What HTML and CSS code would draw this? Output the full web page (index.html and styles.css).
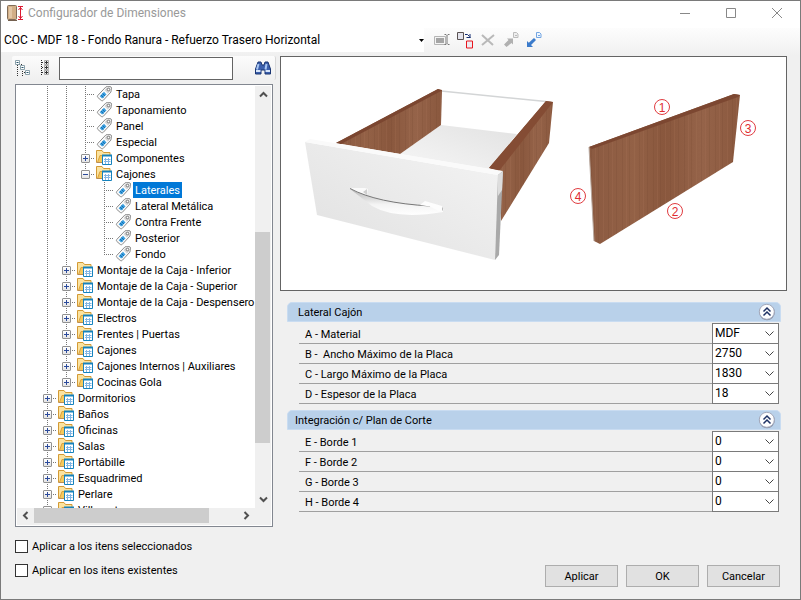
FILE: index.html
```
<!DOCTYPE html>
<html lang="es">
<head>
    <meta charset="UTF-8">
    <meta name="viewport" content="width=device-width, initial-scale=1.0">
    <title>Configurador de Dimensiones</title>
    <link rel="stylesheet" href="styles.css">
</head>
<body>
    <!-- Iconos compartidos del árbol y de los grupos -->
    <svg class="sprites" width="0" height="0">
        <defs>
            <linearGradient id="wood" x1="0" y1="0" x2="1" y2="0">
                <stop offset="0" stop-color="#8b5a41"/>
                <stop offset=".3" stop-color="#936146"/>
                <stop offset=".5" stop-color="#89573d"/>
                <stop offset=".75" stop-color="#956349"/>
                <stop offset="1" stop-color="#8a583e"/>
            </linearGradient>
        </defs>
        <symbol id="tag" viewBox="0 0 16 16">
            <path d="M9.500.8 13.500.6q1.500.1 1.500 1.500l-.6 4-7.600 8.200q-1 .9-2 .2L1.200 11.300q-.7-.9.100-1.900z" fill="#fafafa" stroke="#8c8c8c" stroke-width="1"/>
            <path d="M9.800 2 13.700 1.500l-.3 4-2 2-3.200-3.300z" fill="#d4d4d4"/>
            <path d="M7.500 5.800 10 8.500 5.700 12.600 3.200 10.200z" fill="#3a9fe0"/>
            <path d="M6 7.500 8.500 10M4.500 9 7 11.500" stroke="#1670b0"/>
            <circle cx="12" cy="3.500" r="1.300" fill="#fff" stroke="#777"/>
        </symbol>
        <symbol id="folder" viewBox="0 0 17 16">
            <path d="M.5 12.500V.5H6l1.500 2h6.500v3" fill="#fbe3a0" stroke="#d39a35"/>
            <path d="M1.500 12.500 4 5.500h11.500L13 12.500z" fill="#f6c95c" stroke="#d9a240"/>
            <path d="M.5 12.500h7" stroke="#b98d55"/>
            <path d="M6.500 5.500h9v9h-9z" fill="#fff" stroke="#1683bd"/>
            <path d="M6 4.500h10v2H6z" fill="#1683bd"/>
            <path d="M8 9.500h6.500M8 11.500h6.500M9.500 8v6M12.500 8v6" stroke="#82b6e4"/>
        </symbol>
        <symbol id="collapse" viewBox="0 0 18 18">
            <circle cx="9" cy="9.500" r="7.800" fill="#8b8fa3"/>
            <circle cx="8.800" cy="8.800" r="7.500" fill="#fdfdfe" stroke="#a2a8ba"/>
            <path d="M5.500 8.500 9 5l3.500 3.500M5.500 12.500 9 9l3.500 3.500" fill="none" stroke="#1e3163" stroke-width="1.500"/>
        </symbol>
    </svg>

    <div class="window">
        <header class="titlebar">
            <svg class="app-icon" width="17" height="16" viewBox="0 0 17 16">
                <rect x=".5" y=".5" width="9" height="14" rx="1" fill="#d2af87" stroke="#806c58"/>
                <path d="M2 2h3v11H2z" fill="#e2c7a6"/>
                <path d="M1 15.500h9" stroke="#74604f"/>
                <path d="M11 1.500h5M11 14.500h5M13.500 2v12M11.500 5l2-2.500 2 2.500M11.500 11l2 2.500 2-2.500" fill="none" stroke="#dc1830" stroke-width="1"/>
            </svg>
            <h1>Configurador de Dimensiones</h1>
            <div class="window-buttons">
                <button aria-label="Minimizar"><svg width="12" height="12" viewBox="0 0 12 12"><path d="M1 6.500h10"/></svg></button>
                <button aria-label="Maximizar"><svg width="12" height="12" viewBox="0 0 12 12"><path d="M1.500 1.500h9v9h-9z"/></svg></button>
                <button aria-label="Cerrar"><svg width="12" height="12" viewBox="0 0 12 12"><path d="M1 1l10 10M11 1 1 11"/></svg></button>
            </div>
        </header>

        <div class="toolbar">
            <select class="config-select" aria-label="Configuración">
                <option>COC - MDF 18 - Fondo Ranura - Refuerzo Trasero Horizontal</option>
            </select>
            <button aria-label="Renombrar">
                <svg width="16" height="16" viewBox="0 0 16 16">
                    <path d="M.5 4.500h11v8H.5z" fill="#f4f4f4" stroke="#b5b5b5"/>
                    <path d="M2 6h8v5H2z" fill="#a5a5a5"/>
                    <path d="M10.500 2.500h1.500l1 1 1-1h1.500M13 3.500v8M10.500 12.500h1.500l1-1 1 1h1.500" fill="none" stroke="#777"/>
                </svg>
            </button>
            <button aria-label="Duplicar">
                <svg width="16" height="17" viewBox="0 0 16 17">
                    <path d="M.5.5h6v7h-6z" fill="#e3e3ec" stroke="#5a5252"/>
                    <path d="M8 2.500h2.500l2 2M13 2v4M9.500 5.500h4" fill="none" stroke="#152c70"/>
                    <path d="M9.500 9h6v7h-6z" fill="#ececf2" stroke="#e8141c"/>
                </svg>
            </button>
            <button aria-label="Eliminar">
                <svg width="16" height="16" viewBox="0 0 16 16">
                    <path d="M2 3l11 10M14 3 2 13" stroke="#b9b9b9" stroke-width="2"/>
                </svg>
            </button>
            <button aria-label="Exportar">
                <svg width="16" height="16" viewBox="0 0 16 16">
                    <path d="M1 12.500 5.500 8 4 6.500h6v6L8.500 11 3.500 15z" fill="#b0b0b0"/>
                    <path d="M10.500.5h3l1.500 1.500v3.500h-4.500z" fill="#eee" stroke="#bcbcbc"/>
                    <path d="M12 3.500h2" stroke="#bbb"/>
                </svg>
            </button>
            <button aria-label="Importar">
                <svg width="16" height="16" viewBox="0 0 16 16">
                    <path d="M1 15V9l1.800 1.700L8 6l2 2-5 5L7 15z" fill="#3b7bcb"/>
                    <path d="M10.500.5h3l1.500 1.500v3.500h-4.500z" fill="#eef6ff" stroke="#74a6e2"/>
                    <path d="M12 3.500h2" stroke="#74a6e2"/>
                </svg>
            </button>
        </div>

        <main class="content">
            <section class="sidebar">
                <div class="search-bar">
                    <button aria-label="Contraer todo">
                        <svg width="16" height="16" viewBox="0 0 16 16">
                            <path d="M2.500 5v11M4 4.500h3M7.500 9v7M9 7.500h2M9 12.500h2" stroke="#333" stroke-dasharray="1 1"/>
                            <path d="M.5.5h4v4h-4zM5.500 5.500h4v4h-4zM10.500 10.500h4v4h-4z" fill="#fff" stroke="#8ba1ab"/>
                            <path d="M1.500 2.500h2M6.500 7.500h2M11.500 12.500h2" stroke="#245369"/>
                        </svg>
                    </button>
                    <button aria-label="Expandir todo">
                        <svg width="10" height="16" viewBox="0 0 10 16">
                            <path d="M1.500 0v16" stroke="#222" stroke-dasharray="1 1"/>
                            <path d="M4.500.5h4v4h-4zM4.500 5.500h4v4h-4zM4.500 10.500h4v4h-4z" fill="#eee" stroke="#aaa"/>
                            <path d="M2 2.500h1M2 7.500h1M2 12.500h1M5 2.500h3M5 7.500h3M5 12.500h3M6.500 1v3M6.500 6v3M6.500 11v3" stroke="#333"/>
                        </svg>
                    </button>
                    <input type="text" aria-label="Buscar">
                    <button class="find" aria-label="Buscar">
                        <svg width="16" height="14" viewBox="0 0 16 14">
                            <path d="M3 1h3l1 3h2l1-3h3l2.500 7v5h-5.500V9h-4v4H.5V8z" fill="#3c60ad" stroke="#1b3672"/>
                            <path d="M3.500 3 2 8.500M11.500 3l-1 5.500" stroke="#a9c7f4" stroke-width="2"/>
                            <path d="M1 10h4.500M10.500 10h4.500" stroke="#d8e6fb" stroke-width="2"/>
                        </svg>
                    </button>
                </div>

                <div class="tree-box">
                    <div class="tree-view">
                        <ul class="tree">
                            <li>
                                <ul>
                                    <li>
                                        <ul>
                                            <li><div class="node"><span class="stem"></span><svg><use href="#tag"/></svg><span class="name">Tapa</span></div></li>
                                            <li><div class="node"><span class="stem"></span><svg><use href="#tag"/></svg><span class="name">Taponamiento</span></div></li>
                                            <li><div class="node"><span class="stem"></span><svg><use href="#tag"/></svg><span class="name">Panel</span></div></li>
                                            <li><div class="node"><span class="stem"></span><svg><use href="#tag"/></svg><span class="name">Especial</span></div></li>
                                            <li><div class="node"><span class="stem"><button class="toggle plus" aria-label="Expandir"></button></span><svg><use href="#folder"/></svg><span class="name">Componentes</span></div></li>
                                            <li class="last"><div class="node"><span class="stem"><button class="toggle" aria-label="Contraer"></button></span><svg><use href="#folder"/></svg><span class="name">Cajones</span></div>
                                                <ul>
                                                    <li><div class="node"><span class="stem"></span><svg><use href="#tag"/></svg><span class="name selected">Laterales</span></div></li>
                                                    <li><div class="node"><span class="stem"></span><svg><use href="#tag"/></svg><span class="name">Lateral Metálica</span></div></li>
                                                    <li><div class="node"><span class="stem"></span><svg><use href="#tag"/></svg><span class="name">Contra Frente</span></div></li>
                                                    <li><div class="node"><span class="stem"></span><svg><use href="#tag"/></svg><span class="name">Posterior</span></div></li>
                                                    <li class="last"><div class="node"><span class="stem"></span><svg><use href="#tag"/></svg><span class="name">Fondo</span></div></li>
                                                </ul>
                                            </li>
                                        </ul>
                                    </li>
                                    <li><div class="node"><span class="stem"><button class="toggle plus" aria-label="Expandir"></button></span><svg><use href="#folder"/></svg><span class="name">Montaje de la Caja - Inferior</span></div></li>
                                    <li><div class="node"><span class="stem"><button class="toggle plus" aria-label="Expandir"></button></span><svg><use href="#folder"/></svg><span class="name">Montaje de la Caja - Superior</span></div></li>
                                    <li><div class="node"><span class="stem"><button class="toggle plus" aria-label="Expandir"></button></span><svg><use href="#folder"/></svg><span class="name">Montaje de la Caja - Despensero</span></div></li>
                                    <li><div class="node"><span class="stem"><button class="toggle plus" aria-label="Expandir"></button></span><svg><use href="#folder"/></svg><span class="name">Electros</span></div></li>
                                    <li><div class="node"><span class="stem"><button class="toggle plus" aria-label="Expandir"></button></span><svg><use href="#folder"/></svg><span class="name">Frentes | Puertas</span></div></li>
                                    <li><div class="node"><span class="stem"><button class="toggle plus" aria-label="Expandir"></button></span><svg><use href="#folder"/></svg><span class="name">Cajones</span></div></li>
                                    <li><div class="node"><span class="stem"><button class="toggle plus" aria-label="Expandir"></button></span><svg><use href="#folder"/></svg><span class="name">Cajones Internos | Auxiliares</span></div></li>
                                    <li class="last"><div class="node"><span class="stem"><button class="toggle plus" aria-label="Expandir"></button></span><svg><use href="#folder"/></svg><span class="name">Cocinas Gola</span></div></li>
                                </ul>
                            </li>
                            <li><div class="node"><span class="stem"><button class="toggle plus" aria-label="Expandir"></button></span><svg><use href="#folder"/></svg><span class="name">Dormitorios</span></div></li>
                            <li><div class="node"><span class="stem"><button class="toggle plus" aria-label="Expandir"></button></span><svg><use href="#folder"/></svg><span class="name">Baños</span></div></li>
                            <li><div class="node"><span class="stem"><button class="toggle plus" aria-label="Expandir"></button></span><svg><use href="#folder"/></svg><span class="name">Oficinas</span></div></li>
                            <li><div class="node"><span class="stem"><button class="toggle plus" aria-label="Expandir"></button></span><svg><use href="#folder"/></svg><span class="name">Salas</span></div></li>
                            <li><div class="node"><span class="stem"><button class="toggle plus" aria-label="Expandir"></button></span><svg><use href="#folder"/></svg><span class="name">Portábille</span></div></li>
                            <li><div class="node"><span class="stem"><button class="toggle plus" aria-label="Expandir"></button></span><svg><use href="#folder"/></svg><span class="name">Esquadrimed</span></div></li>
                            <li><div class="node"><span class="stem"><button class="toggle plus" aria-label="Expandir"></button></span><svg><use href="#folder"/></svg><span class="name">Perlare</span></div></li>
                            <li><div class="node"><span class="stem"><button class="toggle plus" aria-label="Expandir"></button></span><svg><use href="#folder"/></svg><span class="name">Villamet</span></div></li>
                        </ul>
                    </div>
                    <div class="scroll vertical">
                        <button aria-label="Subir"><svg width="9" height="9" viewBox="0 0 9 9"><path d="M1 6.500 4.500 3 8 6.500"/></svg></button>
                        <div class="before"></div>
                        <div class="thumb"></div>
                        <div class="after"></div>
                        <button aria-label="Bajar"><svg width="9" height="9" viewBox="0 0 9 9"><path d="M1 2.500 4.500 6 8 2.500"/></svg></button>
                    </div>
                    <div class="scroll horizontal">
                        <button aria-label="Izquierda"><svg width="9" height="9" viewBox="0 0 9 9"><path d="M6.500 1 3 4.500 6.500 8"/></svg></button>
                        <div class="thumb"></div>
                        <div class="after"></div>
                        <button aria-label="Derecha"><svg width="9" height="9" viewBox="0 0 9 9"><path d="M2.500 1 6 4.500 2.500 8"/></svg></button>
                    </div>
                    <div class="corner"></div>
                </div>
            </section>

            <section class="details">
                <div class="preview">
                    <svg viewBox="281 57 505 233">
                        <defs>
                            <pattern id="grain" width="31" height="300" patternUnits="userSpaceOnUse">
                                <path d="M2.500 0v300M9.500 0v300M19.500 0v300M27.500 0v300" stroke="#6f412c" stroke-opacity=".18"/>
                                <path d="M6.500 0v300M14.500 0v300M23.500 0v300" stroke="#b07c5c" stroke-opacity=".18"/>
                            </pattern>
                            <linearGradient id="front" x1="0" y1="1" x2="1" y2="0">
                                <stop offset="0" stop-color="#e0e0e0"/>
                                <stop offset="1" stop-color="#f4f4f4"/>
                            </linearGradient>
                            <linearGradient id="floor" x1="1" y1="0" x2="0" y2="1">
                                <stop offset="0" stop-color="#e2e2e2"/>
                                <stop offset="1" stop-color="#f6f6f6"/>
                            </linearGradient>
                            <linearGradient id="grip" x1="0" y1="0" x2="0" y2="1">
                                <stop offset="0" stop-color="#b4b4b4"/>
                                <stop offset=".6" stop-color="#f4f4f4"/>
                                <stop offset="1" stop-color="#fff"/>
                            </linearGradient>
                        </defs>
                        <!-- Cajón -->
                        <path d="M441 125 517 134 489 169 400 154z" fill="url(#floor)"/>
                        <path d="M441 91 546 101.500" stroke="#d3d5d6" stroke-width="1.500"/>
                        <path d="M336 143 438 89 442 90 441 125 400 154z" fill="url(#wood)"/>
                        <path d="M336 143 438 89 442 90 441 125 400 154z" fill="url(#grain)"/>
                        <path d="M336 143 438 89 442 90.500 341 144z" fill="#7b4630"/>
                        <path d="M489 168 546 101 553 102 549 143 501 221V171z" fill="url(#wood)"/>
                        <path d="M489 168 546 101 553 102 549 143 501 221V171z" fill="url(#grain)"/>
                        <path d="M489 168 546 101 553 102 499 171z" fill="#844c34"/>
                        <path d="M305 142 498 175 495 260 317 215z" fill="url(#front)"/>
                        <path d="M305 142 310 139 503 171 498 175z" fill="#fafafa"/>
                        <path d="M498 175 503 171 499 255 495 260z" fill="#a9a9a9"/>
                        <path d="M498 175 503 171 502 190 498 196z" fill="#ddd"/>
                        <path d="M351 188 365 188 368 189 367 195 354 191z" fill="#fafafa"/>
                        <path d="M363 192 367 189 367 195z" fill="#cfcfcf"/>
                        <path d="M350 189Q377 203 430 206.500L443 208V212Q396 220 372 206z" fill="url(#grip)"/>
                        <path d="M350 188.500Q377 203 430 206" fill="none" stroke="#777"/>
                        <path d="M420 205 425 201 442 206 443.500 210 439 211 430 206.500z" fill="#fdfdfd"/>
                        <path d="M442.500 207.500v3" stroke="#bbb"/>
                        <!-- Lateral -->
                        <path d="M589 147 734 94 740 95 733 162 600 244 594 241z" fill="url(#wood)"/>
                        <path d="M589 147 734 94 740 95 733 162 600 244 594 241z" fill="url(#grain)"/>
                        <path d="M589 147 734 94 740 95 738 97 592 149z" fill="#7c4731"/>
                        <path d="M589 147 594 241" stroke="#b9a99f"/>
                        <g class="edge-marks">
                            <circle cx="662" cy="107" r="7.500"/><text x="662" y="112">1</text>
                            <circle cx="675" cy="211" r="7.500"/><text x="675" y="216">2</text>
                            <circle cx="748" cy="128" r="7.500"/><text x="748" y="133">3</text>
                            <circle cx="578" cy="196" r="7.500"/><text x="578" y="201">4</text>
                        </g>
                    </svg>
                </div>

                <section class="group">
                    <header class="group-header">
                        <h2>Lateral Cajón</h2>
                        <button aria-label="Contraer"><svg width="18" height="18"><use href="#collapse"/></svg></button>
                    </header>
                    <div class="field"><label for="a">A - Material</label><select id="a"><option>MDF</option></select></div>
                    <div class="field"><label for="b">B -&nbsp; Ancho Máximo de la Placa</label><select id="b"><option>2750</option></select></div>
                    <div class="field"><label for="c">C - Largo Máximo de la Placa</label><select id="c"><option>1830</option></select></div>
                    <div class="field"><label for="d">D - Espesor de la Placa</label><select id="d"><option>18</option></select></div>
                </section>

                <section class="group">
                    <header class="group-header cut-plan">
                        <h2>Integración c/ Plan de Corte</h2>
                        <button aria-label="Contraer"><svg width="18" height="18"><use href="#collapse"/></svg></button>
                    </header>
                    <div class="field"><label for="e">E - Borde 1</label><select id="e"><option>0</option></select></div>
                    <div class="field"><label for="f">F - Borde 2</label><select id="f"><option>0</option></select></div>
                    <div class="field"><label for="g">G - Borde 3</label><select id="g"><option>0</option></select></div>
                    <div class="field"><label for="h">H - Borde 4</label><select id="h"><option>0</option></select></div>
                </section>
            </section>
        </main>

        <footer class="footer">
            <div class="options">
                <label><input type="checkbox">Aplicar a los itens seleccionados</label>
                <label><input type="checkbox">Aplicar en los itens existentes</label>
            </div>
            <div class="actions">
                <button>Aplicar</button>
                <button>OK</button>
                <button>Cancelar</button>
            </div>
        </footer>
    </div>
</body>
</html>
```
FILE: styles.css
```
* {
    box-sizing: border-box;
}

body {
    margin: 0;
    font-family: Roboto, "Liberation Sans", sans-serif;
    font-size: 11px;
    color: #000;
}

button, input, select {
    font: inherit;
    color: inherit;
    margin: 0;
    padding: 0;
    border: 0;
    border-radius: 0;
    background: none;
}

svg {
    display: block;
}

ul {
    list-style: none;
    margin: 0;
    padding: 0;
}

.sprites {
    position: absolute;
}

.window {
    display: flex;
    flex-direction: column;
    height: 100vh;
    border: 1px solid #7a7a7a;
    background-color: #f0f0f0;
}

/* Barra de título */
.titlebar {
    display: flex;
    align-items: center;
    height: 24px;
    margin-bottom: 3px;
    padding-left: 6px;
    background-color: #fff;
    box-shadow: 0 3px #fff;
}

.titlebar h1 {
    flex: 1;
    margin: 0 0 0 4px;
    font-size: 12px;
    font-weight: normal;
    color: #999;
}

.window-buttons {
    display: flex;
}

.window-buttons button {
    display: flex;
    justify-content: center;
    align-items: center;
    width: 46px;
    height: 24px;
}

.window-buttons path {
    fill: none;
    stroke: #888;
}

/* Barra de herramientas */
.toolbar {
    display: flex;
    align-items: center;
    gap: 7px;
    height: 28px;
    padding-bottom: 4px;
    background: linear-gradient(#fdfdfd, #f0f0f0);
}

.config-select {
    appearance: none;
    width: 53%;
    height: 24px;
    margin-right: 3px;
    padding-left: 3px;
    background: #fff url("data:image/svg+xml,%3Csvg xmlns='http://www.w3.org/2000/svg' width='5' height='3'%3E%3Cpath d='M0 0h5L2.500 3z'/%3E%3C/svg%3E") no-repeat right center;
    font-size: 12px;
}

/* Zona central */
.content {
    flex: 1;
    display: grid;
    grid-template-columns: 264px 1fr;
    gap: 4px;
    min-height: 0;
    padding: 0 13px 0 11px;
}

.sidebar {
    display: flex;
    flex-direction: column;
    min-height: 0;
}

.search-bar {
    display: flex;
    align-items: center;
    gap: 9px;
    height: 24px;
    margin-bottom: 4px;
    padding: 0 4px 0 3px;
    border-right: 1px solid #d8d8d8;
    border-radius: 2px;
    background: linear-gradient(#fcfcfc, #f0f0f0);
}

.search-bar input {
    width: 174px;
    height: 23px;
    padding: 0 4px;
    border: 1px solid #646464;
    background-color: #fff;
}

.search-bar .find {
    margin-left: auto;
}

.tree-box {
    flex: 1;
    display: grid;
    grid-template-columns: 1fr 16px;
    grid-template-rows: 1fr 17px;
    min-height: 0;
    margin: 0 3px;
    padding: 1px;
    border: 1px solid #828790;
    background-color: #fff;
}

.tree-view {
    min-height: 0;
    overflow: hidden;
    padding-left: 21px;
}

/* La línea punteada vertical es el fondo de cada elemento */
.tree li {
    background: repeating-linear-gradient(#777 0 1px, transparent 1px 2px) 9px 0 / 1px 100% no-repeat;
}

.tree li.last {
    background-size: 1px 8px;
}

.tree li ul {
    padding-left: 19px;
}

.node {
    display: flex;
    align-items: center;
    height: 16px;
}

.node svg {
    flex: none;
    width: 17px;
    height: 16px;
    margin: 0 1px;
}

.stem {
    display: flex;
    flex: none;
    align-items: center;
    width: 19px;
    height: 16px;
    padding-left: 5px;
    background: repeating-linear-gradient(90deg, #777 0 1px, transparent 1px 2px) 9px 8px / 10px 1px no-repeat;
}

.toggle {
    width: 9px;
    height: 9px;
    border: 1px solid #919191;
    border-radius: 1px;
    background:
        linear-gradient(#2b4a9b, #2b4a9b) center / 5px 1px no-repeat,
        linear-gradient(#fff, #e4e4e4);
}

.toggle.plus {
    background:
        linear-gradient(#2b4a9b, #2b4a9b) center / 5px 1px no-repeat,
        linear-gradient(#2b4a9b, #2b4a9b) center / 1px 5px no-repeat,
        linear-gradient(#fff, #e4e4e4);
}

.name {
    height: 16px;
    padding: 0 2px;
    line-height: 18px;
    white-space: nowrap;
}

.name.selected {
    background-color: #0078d7;
    color: #fff;
}

/* Barras de desplazamiento */
.scroll {
    display: flex;
    background-color: #f0f0f0;
}

.scroll button {
    display: flex;
    justify-content: center;
    align-items: center;
    width: 17px;
    height: 17px;
}

.scroll.horizontal button {
    height: 15px;
}

.scroll path {
    fill: none;
    stroke: #505050;
    stroke-width: 2;
}

.scroll .thumb {
    background-color: #cdcdcd;
}

.vertical {
    flex-direction: column;
}

.vertical .before {
    flex: 129;
}

.vertical .thumb {
    flex: 210;
    margin-right: 1px;
}

.vertical .after {
    flex: 48;
}

.horizontal .thumb {
    flex: 175;
    margin-bottom: 2px;
}

.horizontal .after {
    flex: 29;
}

.corner {
    background-color: #f0f0f0;
}

/* Panel derecho */
.preview {
    margin-bottom: 11px;
    border: 1px solid #646464;
    background-color: #fff;
}

.preview svg {
    width: 100%;
    height: auto;
}

.edge-marks circle {
    fill: none;
    stroke: #e03c40;
}

.edge-marks text {
    fill: #e02c30;
    font-family: "Liberation Sans", Arial, sans-serif;
    font-size: 12px;
    text-anchor: middle;
}

.group {
    margin: 0 6px 6px 7px;
}

.group-header {
    display: flex;
    justify-content: space-between;
    align-items: center;
    height: 20px;
    margin-bottom: 2px;
    padding: 0 4px 0 10px;
    border: 1px solid #c9dcf1;
    border-radius: 5px 5px 0 0;
    background-color: #b9d1ea;
}

.group-header.cut-plan {
    padding-left: 7px;
}

.group-header h2 {
    margin: 0;
    font-size: 11px;
    font-weight: normal;
}

.field {
    display: flex;
    justify-content: space-between;
    height: 20px;
    margin: 0 2px 0 12px;
    border-bottom: 1px solid #a0a0a0;
}

.field label {
    padding-left: 6px;
    line-height: 22px;
}

.field select {
    appearance: none;
    width: 67px;
    height: 21px;
    margin-top: -1px;
    padding: 0 0 1px 2px;
    border: 1px solid #7a7a7a;
    background: #fff url("data:image/svg+xml,%3Csvg xmlns='http://www.w3.org/2000/svg' width='9' height='6'%3E%3Cpath d='M.5.5l4 4 4-4' fill='none' stroke='%23444'/%3E%3C/svg%3E") no-repeat right 4px center;
    font-size: 12px;
}

/* Pie */
.footer {
    display: flex;
    justify-content: space-between;
    align-items: flex-end;
    padding: 13px 20px 12px 14px;
}

.options {
    display: flex;
    flex-direction: column;
    gap: 11px;
    padding-bottom: 10px;
}

.options label {
    display: flex;
    align-items: center;
    gap: 4px;
    height: 13px;
}

.options input {
    appearance: none;
    width: 13px;
    height: 13px;
    border: 1px solid #333;
    background-color: #fff;
}

.actions {
    display: flex;
    gap: 8px;
}

.actions button {
    width: 73px;
    height: 22px;
    border: 1px solid #adadad;
    background-color: #e1e1e1;
}
```
